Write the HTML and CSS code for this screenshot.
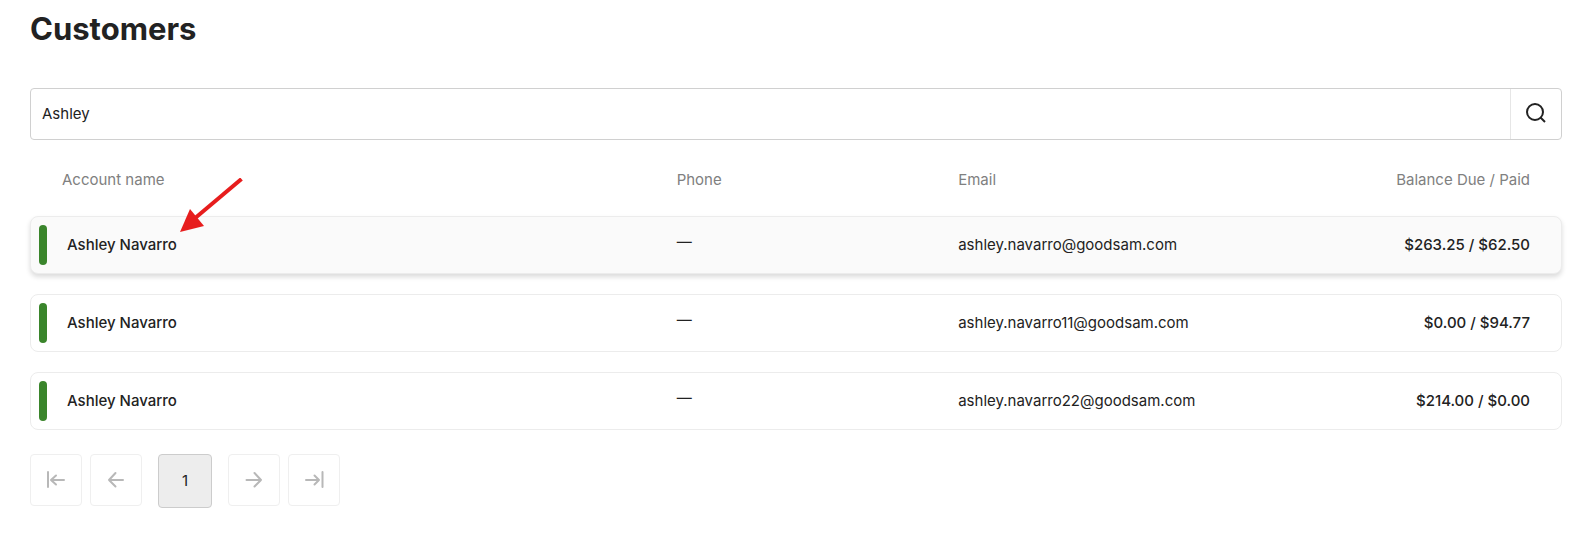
FILE: index.html
```html
<!DOCTYPE html>
<html lang="en">
<head>
<meta charset="utf-8">
<title>Customers</title>
<link rel="stylesheet" href="styles.css">
</head>
<body>
<main class="page">
  <h1 class="title">Customers</h1>
  <form class="search" role="search">
    <input class="search-input" type="text" aria-label="Search customers" value="Ashley">
    <button class="search-button" type="button" aria-label="Search">
      <svg width="24" height="24" viewBox="0 0 24 24" fill="none" stroke="currentColor" stroke-width="2"><circle cx="11" cy="11" r="8"/><path d="M16.5 16.5L21 21"/></svg>
    </button>
  </form>
  <table class="customers">
    <thead>
      <tr class="row head"><th>Account name</th><th>Phone</th><th>Email</th><th class="balance">Balance Due / Paid</th></tr>
    </thead>
    <tbody class="rows">
      <tr class="row card active">
        <td class="name">Ashley Navarro
          <svg class="arrow" width="64" height="56" viewBox="0 0 64 56" fill="#e71d1d"><path d="M61.500 1L14 41" stroke="#e71d1d" stroke-width="4"/><path d="M0 54L10 31L24 48Z"/></svg>
        </td>
        <td class="phone">—</td><td>ashley.navarro@goodsam.com</td><td class="balance">$263.25 / $62.50</td>
      </tr>
      <tr class="row card">
        <td class="name">Ashley Navarro</td><td class="phone">—</td><td>ashley.navarro11@goodsam.com</td><td class="balance">$0.00 / $94.77</td>
      </tr>
      <tr class="row card">
        <td class="name">Ashley Navarro</td><td class="phone">—</td><td>ashley.navarro22@goodsam.com</td><td class="balance">$214.00 / $0.00</td>
      </tr>
    </tbody>
  </table>
  <nav class="pager" aria-label="Pagination">
    <button class="step" type="button" aria-label="First page"><svg width="24" height="24" viewBox="0 0 24 24"><path d="M4 4V19M20 12H7M12 7.500L7 12L12 16.500"/></svg></button>
    <button class="step" type="button" aria-label="Previous page"><svg width="24" height="24" viewBox="0 0 24 24"><path d="M19 12H5M11.500 5L5 12L11.500 18.500"/></svg></button>
    <button class="current" type="button" aria-current="page">1</button>
    <button class="step" type="button" aria-label="Next page"><svg width="24" height="24" viewBox="0 0 24 24"><path d="M4.500 12H19M12.500 5L19 12L12.500 18.500"/></svg></button>
    <button class="step" type="button" aria-label="Last page"><svg width="24" height="24" viewBox="0 0 24 24"><path d="M20.500 4V19M4 12H17M12.500 7.500L17 12L12.500 16.500"/></svg></button>
  </nav>
</main>
</body>
</html>
```
FILE: styles.css
```css
* { box-sizing: border-box; }
body {
  margin: 0;
  background: #fff;
  color: #222;
  font: 15px/24px Inter, "Liberation Sans", sans-serif;
}
button, input { font: inherit; color: inherit; margin: 0; }
.page { padding: 9px 31px 40px 30px; }
.title { margin: 0 0 39px; font-size: 31px; line-height: 40px; font-weight: 700; }

.search {
  display: flex;
  height: 52px;
  border: 1px solid #d0d0d0;
  border-radius: 4px;
}
.search-input {
  flex: 1;
  min-width: 0;
  padding: 0 11px;
  border: 0;
  background: none;
  outline: none;
}
.search-button {
  display: grid;
  place-items: center;
  width: 51px;
  padding: 0 0 2px;
  border: 0;
  border-left: 1px solid #e6e6e6;
  background: none;
}

.customers, .customers thead { display: block; }
.rows { display: grid; gap: 20px; }
.row {
  display: grid;
  grid-template-columns: 42.2% 18.4% 1fr auto;
  align-items: center;
}
.row th, .row td { padding: 0; text-align: left; }
.row .balance { padding-right: 31px; text-align: right; }
.head { height: 76px; padding: 4px 1px 0; }
.head th { color: #808080; font-weight: 400; }
.head th:first-child { padding-left: 31px; }
.card {
  padding: 8px 0;
  border: 1px solid #ececec;
  border-radius: 8px;
}
.card.active {
  background: #fafafa;
  box-shadow: 0 3px 5px rgba(0, 0, 0, 0.14);
}
.card .name {
  position: relative;
  display: flex;
  align-items: center;
  gap: 20px;
  padding-left: 8px;
  font-weight: 500;
}
.name::before {
  content: "";
  width: 8px;
  height: 40px;
  border-radius: 4px;
  background: #3a852b;
}
.card .balance { font-weight: 500; }
.card .phone { padding-bottom: 6px; }
.arrow { position: absolute; left: 149px; top: -47px; }

.pager { display: flex; gap: 8px; margin-top: 24px; }
.step, .current {
  display: grid;
  place-items: center;
  width: 52px;
  height: 52px;
  padding: 0;
  border: 1px solid #efefef;
  border-radius: 4px;
  background: #fff;
}
.current {
  width: 54px;
  height: 54px;
  margin: 0 8px;
  border-color: #ccc;
  background: #ededed;
}
.step path {
  fill: none;
  stroke: #b8b8b8;
  stroke-width: 2;
  stroke-linecap: round;
  stroke-linejoin: round;
}
```
